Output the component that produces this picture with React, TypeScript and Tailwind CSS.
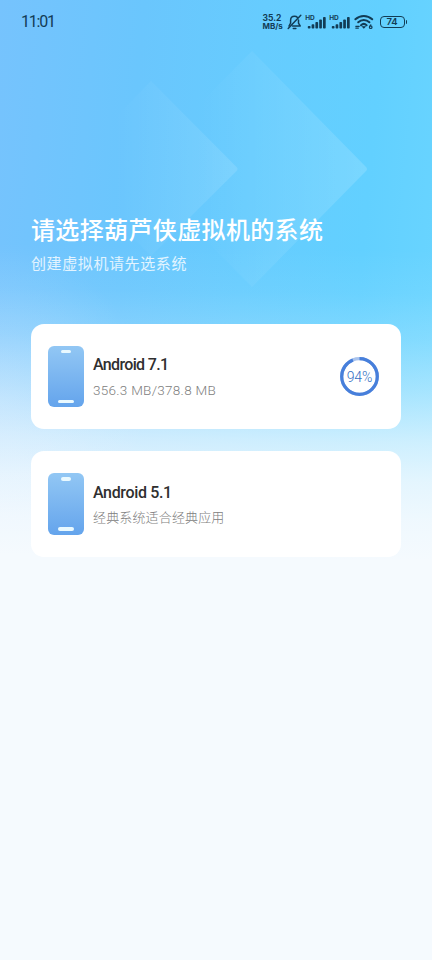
import clsx from "clsx";

interface SystemImage {
  name: string;
  detail: string;
  progress?: number;
  nameClass: string;
  detailClass: string;
}

const systems: SystemImage[] = [
  {
    name: "Android 7.1",
    detail: "356.3 MB/378.8 MB",
    progress: 94,
    nameClass: "tracking-[-0.65px]",
    detailClass: "-mt-px mb-px text-[13.5px] tracking-[0.28px]",
  },
  {
    name: "Android 5.1",
    detail: "经典系统适合经典应用",
    nameClass: "tracking-[-0.35px]",
    detailClass: "text-[13px] tracking-[0.15px]",
  },
];

export default function App() {
  return (
    <div className="relative isolate h-[960px] w-[432px] overflow-hidden bg-[#f5fafe] font-['Roboto','Noto_Sans_CJK_SC',sans-serif]">
      <Backdrop />
      <StatusBar />

      <header className="px-[31px] pt-[169px] text-white">
        <h1 className="h-9 whitespace-nowrap text-[24px] leading-9 font-medium tracking-[0.36px]">
          请选择葫芦侠虚拟机的系统
        </h1>
        <p className="mt-[3px] h-6 text-[15px] leading-6 font-normal tracking-[0.6px] text-white/80">
          创建虚拟机请先选系统
        </p>
      </header>

      <main className="mt-[47.5px] flex flex-col gap-[22px] px-[31px]">
        {systems.map((s) => (
          <SystemCard key={s.name} system={s} />
        ))}
      </main>
    </div>
  );
}

function Backdrop() {
  return (
    <div className="absolute inset-x-0 top-0 -z-10 h-[560px]" aria-hidden="true">
      <div className="absolute inset-0 bg-[linear-gradient(95deg,#76c3fd_0%,#6ac6fd_30%,#66ccfe_55%,#62d0ff_80%,#6ad5ff_100%)]" />
      <svg className="absolute inset-0" width="432" height="300" viewBox="0 0 432 300" fill="none">
        <defs>
          <linearGradient id="near" x1="115" y1="0" x2="237" y2="0" gradientUnits="userSpaceOnUse">
            <stop stopColor="#fff" stopOpacity="0" />
            <stop offset="1" stopColor="#fff" stopOpacity="0.12" />
          </linearGradient>
          <linearGradient id="far" x1="200" y1="0" x2="367" y2="0" gradientUnits="userSpaceOnUse">
            <stop stopColor="#fff" stopOpacity="0" />
            <stop offset="1" stopColor="#fff" stopOpacity="0.15" />
          </linearGradient>
        </defs>
        <path d="M151 81 236.5 167q2 2 0 4L151 256 65 169Z" fill="url(#near)" />
        <path d="M252 51 366 167q2 2 0 4L252 287 135 169Z" fill="url(#far)" />
      </svg>
      {/* fade into the page colour */}
      <div className="absolute inset-0 bg-[linear-gradient(181deg,rgba(245,250,254,0)_44%,rgba(245,250,254,0.06)_52%,rgba(245,250,254,0.2)_60%,rgba(245,250,254,0.44)_69%,rgba(245,250,254,0.72)_78%,rgba(245,250,254,0.88)_85%,rgba(245,250,254,0.96)_92%,#f5fafe_99%)]" />
      <div className="absolute inset-0 bg-[radial-gradient(ellipse_150px_150px_at_0px_400px,rgba(245,250,254,0.2),rgba(245,250,254,0))]" />
    </div>
  );
}

function StatusBar() {
  return (
    <div className="flex h-11 items-center pr-[25px] pl-[21px] text-[#123c55]">
      <span className="font-['Roboto'] text-[16px] leading-5 tracking-[-1.2px]">11:01</span>
      <div className="ml-auto flex items-center">
        <div className="w-[21px] font-['Inter'] font-bold">
          <div className="h-[8px] text-[8.5px] leading-[8px]">35.2</div>
          <div className="h-[8px] text-[8px] leading-[8px]">MB/s</div>
        </div>
        <MutedBell />
        <Signal />
        <Signal />
        <Wifi />
        <Battery level={74} />
      </div>
    </div>
  );
}

function MutedBell() {
  return (
    <svg className="mr-[2px] ml-[3px]" width="16" height="16" viewBox="0 0 16 16" fill="none" stroke="currentColor" strokeWidth="1.5" strokeLinecap="round" strokeLinejoin="round">
      <path d="M3.6 9.2V6.3C3.6 3.8 5.2 2.3 7.5 2.3c1.3 0 2.3.4 3 1.2M11.5 6v3.2l1.7 2.8H5.5M2 12l1.6-2.8" />
      <path d="M1.2 14.4 13.8 1.2" />
      <path d="M6.3 14.5h2.6" />
    </svg>
  );
}

function Signal() {
  return (
    <svg className="mr-px ml-[2px] overflow-visible" width="21" height="15" viewBox="0 0 21 15" fill="currentColor">
      <text x="-1.8" y="5.2" fontFamily="Inter" fontSize="6.5" fontWeight="700">
        HD
      </text>
      <rect x="0.8" y="11" width="2.7" height="2.5" rx="0.8" />
      <rect x="4.6" y="9.3" width="2.7" height="4.2" rx="0.8" />
      <rect x="8.4" y="7" width="2.7" height="6.5" rx="0.8" />
      <rect x="12.2" y="4.5" width="2.7" height="9" rx="0.8" />
      <rect x="16" y="2" width="2.7" height="11.5" rx="0.8" />
    </svg>
  );
}

function Wifi() {
  return (
    <svg className="ml-px" width="20" height="16" viewBox="0 0 20 16" fill="none" stroke="currentColor" strokeWidth="2" strokeLinecap="round">
      <path d="M1.4 5.2C6.2.8 13.4.8 18.2 5.2" />
      <path d="M4.2 8.3c3.2-3 8-3 11.2 0" />
      <path d="M7 11.2c1.6-1.5 4-1.5 5.6 0" />
      <path d="m8.8 12.8 1 1 1-1Z" fill="currentColor" strokeWidth="1.2" />
      <path d="M1.8 12.3h3.4M1.8 14.1h2.6" strokeWidth="1.2" />
      <circle cx="16.7" cy="13.2" r="1.3" strokeWidth="1.2" />
      <path d="M15.6 12.8 16.8 10.8" strokeWidth="1.1" />
    </svg>
  );
}

function Battery({ level }: { level: number }) {
  return (
    <div className="ml-[6px] flex items-center">
      <div className="flex h-3 w-[25px] items-center justify-center rounded-[4px] border-[1.5px] border-current font-['Inter'] text-[9.5px] leading-none font-semibold">
        {level}
      </div>
      <div className="ml-px h-1 w-[1.5px] rounded-r bg-current" />
    </div>
  );
}

function SystemCard({ system }: { system: SystemImage }) {
  return (
    <section className="flex h-[105.5px] items-center rounded-[13px] bg-white pr-[22px] pl-[17px]">
      <PhoneIcon />
      <div className="ml-[9px] pt-[2px]">
        <h2 className={clsx("mb-[2.5px] text-[16px] leading-6 font-medium text-[#2f2f2f]", system.nameClass)}>
          {system.name}
        </h2>
        <p className={clsx("leading-[22px] font-light text-[#808080]", system.detailClass)}>{system.detail}</p>
      </div>
      {system.progress !== undefined && <ProgressRing value={system.progress} />}
    </section>
  );
}

function PhoneIcon() {
  return (
    <div className="flex h-[61.5px] w-9 flex-col items-center justify-between rounded-[6px] bg-linear-to-b from-[#92c7f4] to-[#64a4ec] pt-1 pb-1">
      <div className="h-[3.5px] w-[10px] rounded-full bg-[#e9f9ff]" />
      <div className="h-[3.5px] w-4 rounded-full bg-[#e9f9ff]" />
    </div>
  );
}

function ProgressRing({ value }: { value: number }) {
  return (
    <div className="relative ml-auto flex size-[39px] items-center justify-center">
      <svg className="absolute inset-0 -rotate-90" width="39" height="39" viewBox="0 0 39 39" fill="none" strokeWidth="3.2">
        <circle cx="19.5" cy="19.5" r="17.8" stroke="#a9c3ed" />
        <circle cx="19.5" cy="19.5" r="17.8" stroke="#477fdb" pathLength="100" strokeDasharray={`${value} 100`} />
      </svg>
      <span className="pt-[2px] text-[14px] font-light tracking-[-0.1px] text-[#3470c4]">{value}%</span>
    </div>
  );
}
